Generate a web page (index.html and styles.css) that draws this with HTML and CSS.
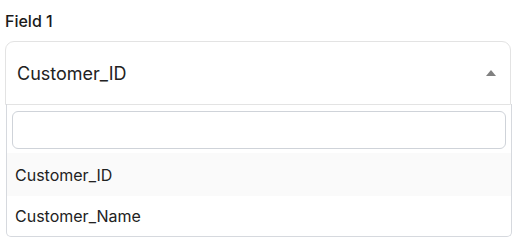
FILE: index.html
```html
<!DOCTYPE html>
<html lang="en">
<head>
    <meta charset="UTF-8">
    <meta name="viewport" content="width=device-width, initial-scale=1.0">
    <title>Field 1</title>
    <link rel="stylesheet" href="styles.css">
</head>
<body>
    <div class="field">
        <label class="field-label">Field 1</label>
        <div class="select open">
            <span class="select-value">Customer_ID</span>
            <span class="select-arrow"></span>
        </div>
        <div class="dropdown">
            <input class="dropdown-search" type="text">
            <ul class="options">
                <li class="option active">Customer_ID</li>
                <li class="option">Customer_Name</li>
            </ul>
        </div>
    </div>
</body>
</html>
```

FILE: styles.css
```css
body {
    margin: 0;
    background-color: #ffffff;
    color: #222222;
    font-family: 'Inter', 'Noto Sans', sans-serif;
}
.field {
    width: 506px;
    padding: 9px 0 0 5px;
}
.field-label {
    display: block;
    font-size: 16px;
    font-weight: 500;
    line-height: 24px;
    color: #1a1a1a;
    margin-bottom: 8px;
}
.select {
    display: flex;
    align-items: center;
    justify-content: space-between;
    height: 64px;
    box-sizing: border-box;
    padding: 0 14px 0 11px;
    border: 1px solid #e3e3e3;
    border-radius: 9px;
}
.select.open {
    border-radius: 9px 9px 0 0;
}
.select-value {
    font-size: 18px;
    color: #222222;
}
.select-arrow {
    width: 0;
    height: 0;
    border-left: 5px solid transparent;
    border-right: 5px solid transparent;
    border-bottom: 6px solid #808080;
    margin-top: -1px;
}
.dropdown {
    margin: -1px -1px 0 1px;
    border: 1px solid #d6d9de;
    border-top: none;
    border-radius: 0 0 5px 5px;
    padding-top: 7px;
}
.dropdown-search {
    display: block;
    box-sizing: border-box;
    width: calc(100% - 10px);
    height: 38px;
    margin: 0 5px 4px 5px;
    border: 1px solid #cfd3d9;
    border-radius: 6px;
    outline: none;
    font-family: inherit;
    font-size: 16px;
}
.options {
    list-style: none;
    margin: 0;
    padding: 0;
}
.option {
    height: 42px;
    line-height: 42px;
    padding-left: 8px;
    font-size: 16px;
    color: #222222;
}
.option.active {
    background-color: #fafafa;
    height: 43px;
    line-height: 44px;
}
.option:last-child {
    height: 40px;
    line-height: 40px;
}
```
